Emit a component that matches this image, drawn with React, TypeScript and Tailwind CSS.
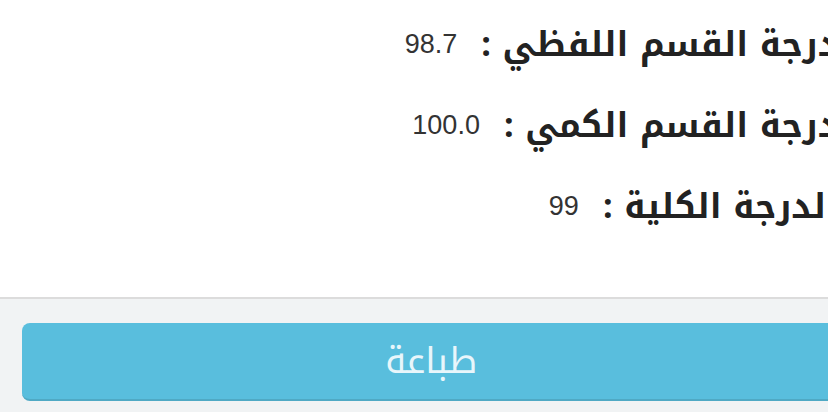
const rows = [
  { label: "درجة القسم اللفظي", value: "98.7" },
  { label: "درجة القسم الكمي", value: "100.0" },
  { label: "الدرجة الكلية", value: "99" },
];

export default function App() {
  return (
    <div className="w-[828px] h-[412px] overflow-hidden bg-white">
      <div
        dir="rtl"
        className="w-[862px] font-['Noto_Kufi_Arabic','Droid_Arabic_Kufi','Noto_Sans_Arabic','DejaVu_Sans',sans-serif]"
      >
        {/* Scores */}
        <div className="h-[297px] pr-[24px] pt-[24px] flex flex-col gap-[41px]">
          {rows.map((row) => (
            <div key={row.label} className="flex items-center h-[40px] text-right">
              <span className="text-[34px] font-bold text-[#222]">{row.label} :</span>
              <span className="mr-[24px] text-[27px] text-[#333] font-['Liberation_Sans',sans-serif]">
                {row.value}
              </span>
            </div>
          ))}
        </div>

        {/* Footer */}
        <div className="border-t-2 border-[#dcdcdc] bg-[#f1f3f4] px-[22px] pt-[24px] pb-[20px]">
          <button className="w-full h-[78px] rounded-lg bg-[#59bedd] border-b-2 border-[#4fa9c4] text-[36px] text-[#e8f6fb]">
            طباعة
          </button>
        </div>
      </div>
    </div>
  );
}
